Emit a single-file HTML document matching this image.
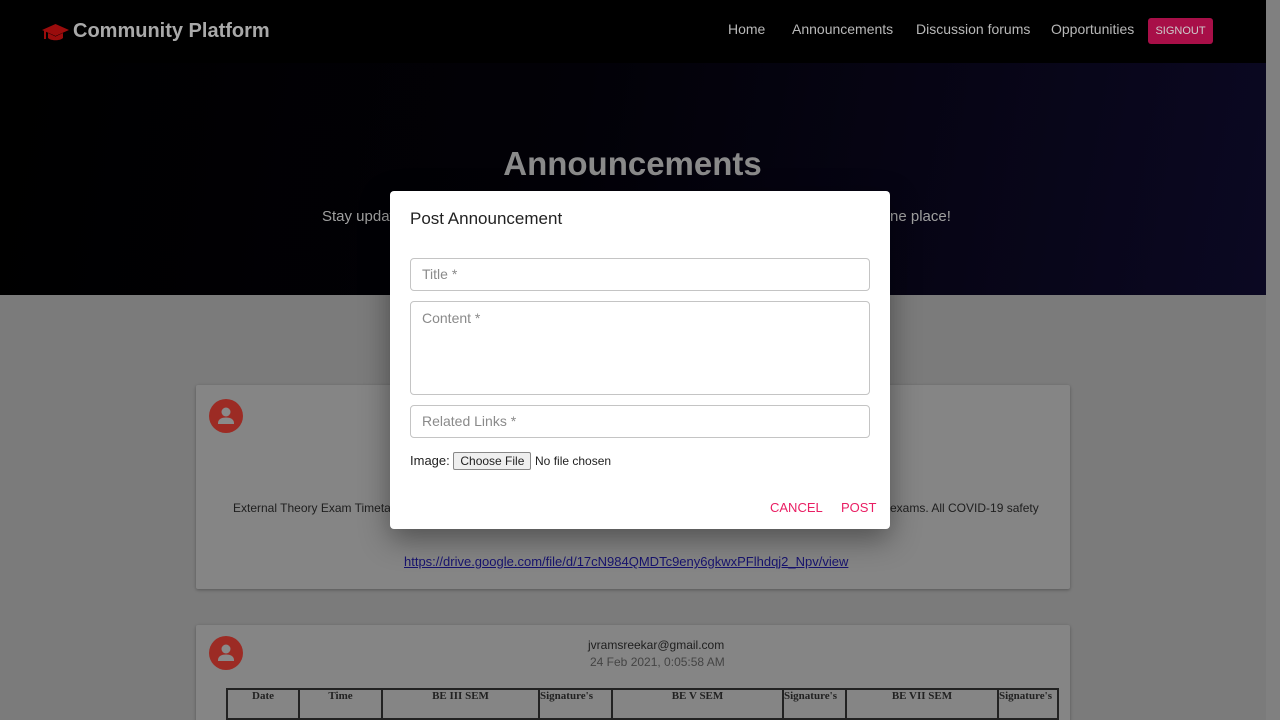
<!DOCTYPE html>
<html style="width:1280px;height:720px;overflow:hidden"><head><style>
*{box-sizing:border-box;margin:0;padding:0}
body{width:1280px;height:720px;overflow:hidden;background:#7b7b7b;font-family:"Liberation Sans",sans-serif;position:relative}
.nav{position:absolute;left:0;top:0;width:1266px;height:63px;background:#000}
.hero{position:absolute;left:0;top:63px;width:1266px;height:232px;background:linear-gradient(100deg,#000 0%,#020107 45%,#0b0822 100%)}
.brand{position:absolute;left:73px;top:20px;color:#a9a9a9;font-weight:bold;font-size:20px}
.nl{position:absolute;top:21px;color:#b8b8b8;font-size:14px}
.so{position:absolute;left:1148px;top:18px;width:65px;height:26px;background:#a80f48;color:#ccc;font-size:11px;text-align:center;line-height:26px;border-radius:3px}
.h1{position:absolute;left:0;width:1265px;top:145px;text-align:center;color:#8a8a8a;font-weight:bold;font-size:33px}
.sub{position:absolute;top:208px;color:#a0a0a0;font-size:15px}
.card{position:absolute;left:196px;width:874px;background:#858585;box-shadow:0 1px 3px rgba(0,0,0,.3);border-radius:2px}
.av{position:absolute;width:34px;height:34px;border-radius:50%;background:#9c2b24;left:13px}
.t{position:absolute;font-size:12px;color:#1e1e1e}
.dlg{position:absolute;left:390px;top:191px;width:500px;height:338px;background:#fff;border-radius:4px;box-shadow:0 10px 30px rgba(0,0,0,.4)}
.f{position:absolute;left:20px;width:460px;border:1px solid #c4c4c4;border-radius:4px;color:#8a8a8a;font-size:14px;padding:0 11px}
.btn{position:absolute;top:309px;color:#e91e63;font-size:13px}
.sbar{position:absolute;right:0;top:0;width:14px;height:720px;background:#808080}
</style></head><body>
<div class="nav">
<svg style="position:absolute;left:42px;top:24px" width="27" height="18" viewBox="0 0 27 18"><path d="M13.5 0L27 6 13.5 12 0 6z" fill="#9a0c0c"/><path d="M6 9v5c3 3 12 3 15 0V9l-7.5 3.5z" fill="#9a0c0c"/><path d="M3 7v8" stroke="#9a0c0c" stroke-width="2"/></svg>
<div class="brand">Community Platform</div>
<div class="nl" style="left:728px">Home</div>
<div class="nl" style="left:792px">Announcements</div>
<div class="nl" style="left:916px">Discussion forums</div>
<div class="nl" style="left:1051px">Opportunities</div>
<div class="so">SIGNOUT</div>
</div>
<div class="hero"></div>
<div class="sbar"></div>
<div class="h1">Announcements</div>
<div class="sub" style="left:322px">Stay updat</div>
<div class="sub" style="left:890px">ne place!</div>
<div class="card" style="top:385px;height:204px">
<div class="av" style="top:14px"><svg width="34" height="34" viewBox="0 0 34 34"><circle cx="17" cy="13" r="4.5" fill="#8a8a8a"/><path d="M9 24c0-4 4-5.5 8-5.5s8 1.5 8 5.5v1H9z" fill="#8a8a8a"/></svg></div>
<div class="t" style="left:37px;top:116px">External Theory Exam Timetal</div>
<div class="t" style="left:694px;top:116px">exams. All COVID-19 safety</div>
<div class="t" style="left:208px;top:169px;color:#17136e;text-decoration:underline;font-size:13px">https://drive.google.com/file/d/17cN984QMDTc9eny6gkwxPFlhdqj2_Npv/view</div>
</div>
<div class="card" style="top:625px;height:110px">
<div class="av" style="top:11px"><svg width="34" height="34" viewBox="0 0 34 34"><circle cx="17" cy="13" r="4.5" fill="#8a8a8a"/><path d="M9 24c0-4 4-5.5 8-5.5s8 1.5 8 5.5v1H9z" fill="#8a8a8a"/></svg></div>
<div class="t" style="left:392px;top:13px">jvramsreekar@gmail.com</div>
<div class="t" style="left:394px;top:30px;color:#444">24 Feb 2021, 0:05:58 AM</div>
<table style="position:absolute;left:30px;top:63px;width:833px;border-collapse:collapse;font-family:'Liberation Serif',serif;font-size:11px;font-weight:bold;color:#222;table-layout:fixed">
<tr style="height:30px;vertical-align:top;text-align:center">
<td style="border:2px solid #222;width:72px">Date</td><td style="border:2px solid #222;width:83px">Time</td><td style="border:2px solid #222;width:157px">BE III SEM</td><td style="border:2px solid #222;width:73px;text-align:left;word-break:break-all">Signature's</td><td style="border:2px solid #222;width:171px">BE V SEM</td><td style="border:2px solid #222;width:63px;text-align:left;word-break:break-all">Signature's</td><td style="border:2px solid #222;width:152px">BE VII SEM</td><td style="border:2px solid #222;text-align:left;word-break:break-all">Signature's</td></tr></table>
</div>
<div class="dlg">
<div style="position:absolute;left:20px;top:18px;font-size:17px;color:#222">Post Announcement</div>
<div class="f" style="top:67px;height:33px;line-height:31px">Title *</div>
<div class="f" style="top:110px;height:94px;padding-top:8px">Content *</div>
<div class="f" style="top:214px;height:33px;line-height:31px">Related Links *</div>
<div style="position:absolute;left:20px;top:261px;font-size:13px;color:#222">Image: <span style="display:inline-block;border:1px solid #888;background:#efefef;border-radius:2px;padding:1px 6px;font-size:12px">Choose File</span> <span style="font-size:12px">No file chosen</span></div>
<div class="btn" style="left:380px">CANCEL</div>
<div class="btn" style="left:451px">POST</div>
</div>
</body></html>
